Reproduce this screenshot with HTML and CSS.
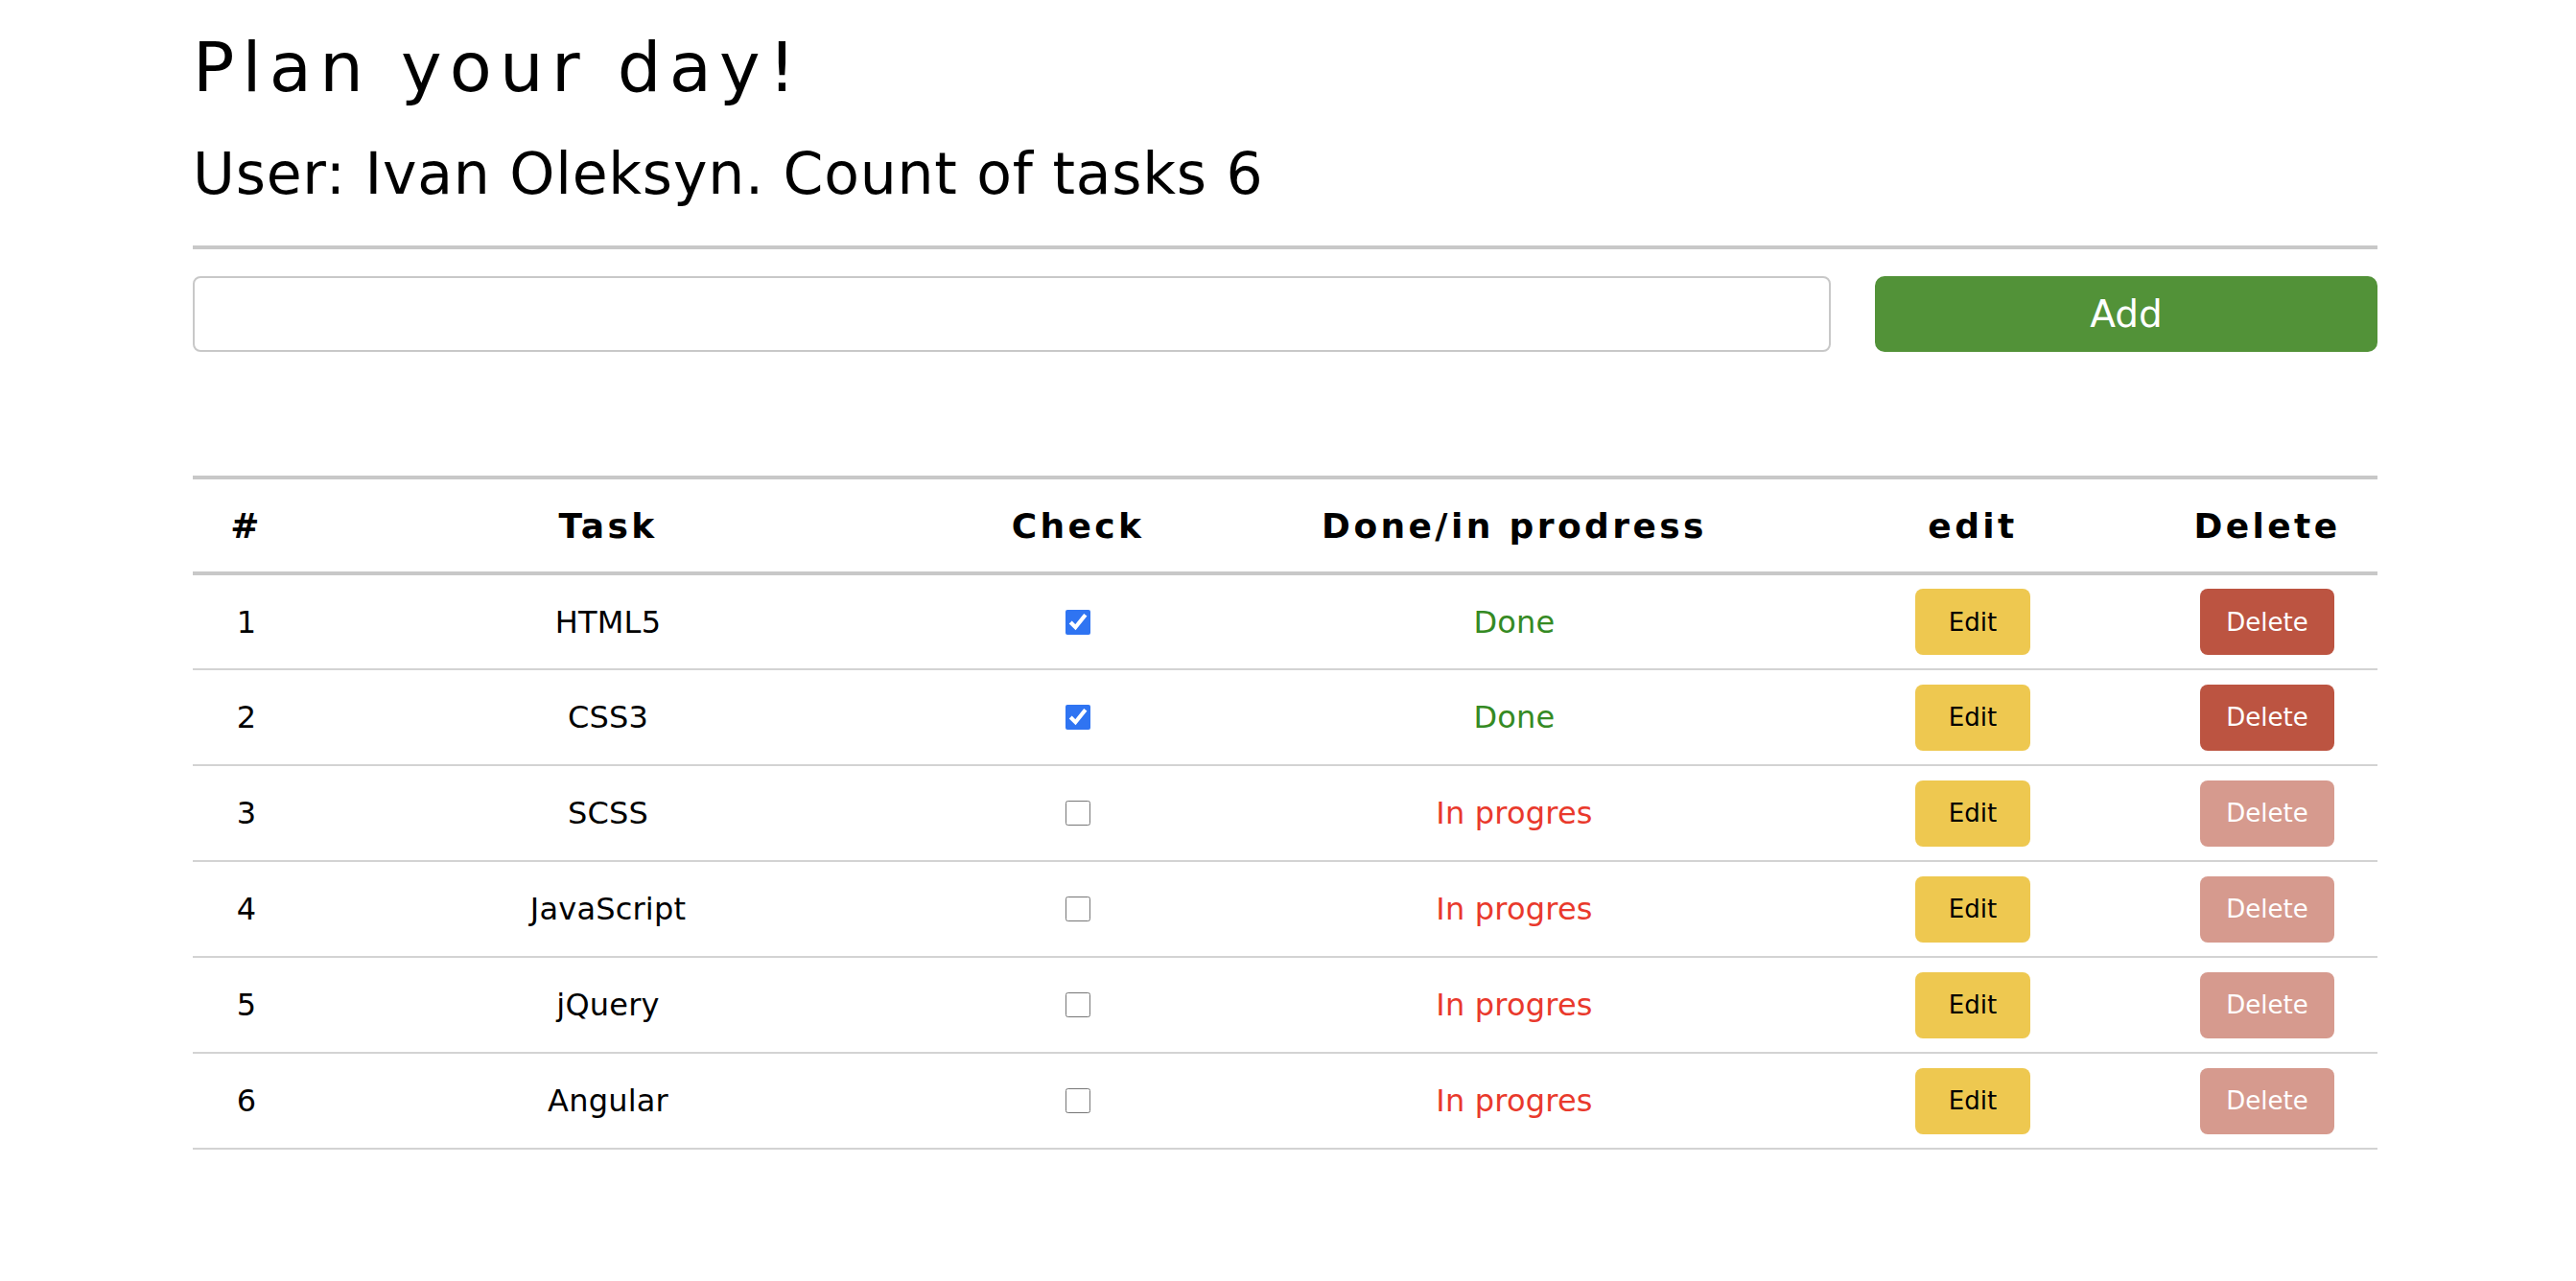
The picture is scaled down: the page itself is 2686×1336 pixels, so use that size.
FILE: index.html
```html
<!DOCTYPE html>
<html lang="en">
<head>
<meta charset="utf-8">
<title>Plan your day!</title>
<link rel="stylesheet" href="styles.css">
</head>
<body>
<div class="page">
  <h1 class="title">Plan your day!</h1>
  <h2 class="subtitle">User: Ivan Oleksyn. Count of tasks 6</h2>
  <hr class="divider">
  <form class="add-form">
    <input class="add-input" type="text">
    <button class="add-btn" type="button">Add</button>
  </form>
  <table class="tasks">
    <colgroup>
      <col class="c-num"><col class="c-task"><col class="c-check"><col class="c-status"><col class="c-edit"><col class="c-del">
    </colgroup>
    <thead>
      <tr><th>#</th><th>Task</th><th>Check</th><th>Done/in prodress</th><th>edit</th><th>Delete</th></tr>
    </thead>
    <tbody>
      <tr><td>1</td><td>HTML5</td><td><input class="chk" type="checkbox" checked></td><td class="done">Done</td><td><button class="btn-edit">Edit</button></td><td><button class="btn-del">Delete</button></td></tr>
      <tr><td>2</td><td>CSS3</td><td><input class="chk" type="checkbox" checked></td><td class="done">Done</td><td><button class="btn-edit">Edit</button></td><td><button class="btn-del">Delete</button></td></tr>
      <tr><td>3</td><td>SCSS</td><td><input class="chk" type="checkbox"></td><td class="progress">In progres</td><td><button class="btn-edit">Edit</button></td><td><button class="btn-del btn-disabled">Delete</button></td></tr>
      <tr><td>4</td><td>JavaScript</td><td><input class="chk" type="checkbox"></td><td class="progress">In progres</td><td><button class="btn-edit">Edit</button></td><td><button class="btn-del btn-disabled">Delete</button></td></tr>
      <tr><td>5</td><td>jQuery</td><td><input class="chk" type="checkbox"></td><td class="progress">In progres</td><td><button class="btn-edit">Edit</button></td><td><button class="btn-del btn-disabled">Delete</button></td></tr>
      <tr><td>6</td><td>Angular</td><td><input class="chk" type="checkbox"></td><td class="progress">In progres</td><td><button class="btn-edit">Edit</button></td><td><button class="btn-del btn-disabled">Delete</button></td></tr>
    </tbody>
  </table>
</div>
</body>
</html>
```

FILE: styles.css
```css
* { box-sizing: border-box; }

body {
  margin: 0;
  background: #ffffff;
  color: #000000;
  font-family: "DejaVu Sans", Verdana, sans-serif;
}

.page {
  width: 2278px;
  margin-left: 201px;
  padding-top: 27px;
}

.title {
  margin: 0;
  font-size: 72px;
  font-weight: normal;
  letter-spacing: 8.2px;
  line-height: 86px;
}

.subtitle {
  margin: 32px 0 0 0;
  font-size: 60px;
  font-weight: normal;
  letter-spacing: 0.75px;
  line-height: 72px;
}

.divider {
  margin: 39px 0 0 0;
  border: none;
  height: 4px;
  background: #c8c8c8;
}

.add-form {
  display: flex;
  gap: 46px;
  margin-top: 28px;
}

.add-input {
  flex: 1;
  height: 79px;
  border: 2px solid #c8c8c8;
  border-radius: 8px;
  background: #fff;
  font-size: 32px;
  font-family: inherit;
  padding: 0 16px;
}

.add-btn {
  width: 524px;
  height: 79px;
  border: none;
  border-radius: 10px;
  background: #529238;
  color: #fff;
  font-family: inherit;
  font-size: 39px;
}

.tasks {
  margin-top: 129px;
  width: 100%;
  table-layout: fixed;
  border-collapse: collapse;
  border-top: 4px solid #c8c8c8;
}

.c-num { width: 112px; }
.c-task { width: 642px; }
.c-check { width: 338px; }
.c-status { width: 572px; }
.c-edit { width: 384px; }
.c-del { width: 230px; }

.tasks th {
  height: 100px;
  font-size: 36px;
  font-weight: bold;
  letter-spacing: 3.4px;
  text-align: center;
  vertical-align: middle;
  border-bottom: 4px solid #c8c8c8;
  padding: 0;
}

.tasks td {
  height: 100px;
  font-size: 32px;
  letter-spacing: 0.2px;
  text-align: center;
  vertical-align: middle;
  border-bottom: 2px solid #d3d3d3;
  padding: 0;
}

.done { color: #358a23; }
.progress { color: #e9392c; }

.chk {
  width: 26px;
  height: 26px;
  margin: 0;
  accent-color: #2f74f2;
  vertical-align: middle;
  position: relative;
  top: -2px;
}

.btn-edit,
.btn-del {
  height: 69px;
  border: none;
  border-radius: 8px;
  font-family: inherit;
  font-size: 26px;
  letter-spacing: 0;
  padding: 0;
  vertical-align: middle;
}

.btn-edit {
  width: 120px;
  background: #eec850;
  color: #000;
}

.btn-del {
  width: 140px;
  background: #bc5441;
  color: #fff;
}

.btn-disabled {
  background: #d69a8e;
}
```
